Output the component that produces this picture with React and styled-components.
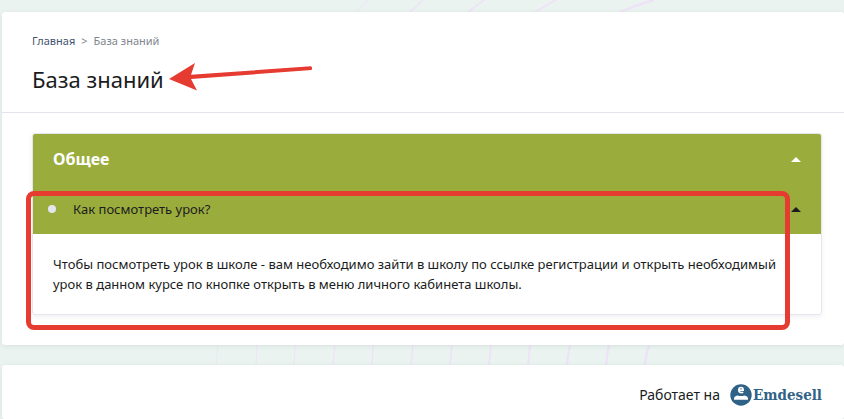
import React, { useState } from 'react';
import styled, { createGlobalStyle } from 'styled-components';

const GlobalStyle = createGlobalStyle`
* {
    box-sizing: border-box;
}

body {
    margin: 0;
    background: #eaf3f0;
    color: #1a1c21;
    font-family: "Noto Sans", sans-serif;
    font-size: 13px;
    line-height: 20px;
}
`

const Page = styled.div`
position: relative;
display: flex;
flex-direction: column;
gap: 20px;
padding: 12px 0 0 2px;
`

const Backdrop = styled.svg`
position: absolute;
top: 0;
left: 0;
z-index: -1;
`

const Card = styled.div`
background: #fff;
border-radius: 3px;
box-shadow: 0 1px 5px rgba(60, 80, 80, 0.1);
`

const Header = styled.header`
padding: 19px 30px 17px;
border-bottom: 1px solid #e2e5ef;
`

const Breadcrumbs = styled.nav`
display: flex;
gap: 6px;
font-size: 11px;
color: #80858f;
`

const CrumbLink = styled.a`
color: #3f5470;
text-decoration: none;
`

const Title = styled.h1`
position: relative;
width: fit-content;
margin: 12px 0 0;
font-size: 22px;
line-height: 32px;
font-weight: 400;
`

const Arrow = styled.svg`
position: absolute;
left: 136px;
top: -1px;
`

const Content = styled.main`
padding: 20px 22px 30px 30px;
`

const Accordion = styled.section`
position: relative;
border: 1px solid #e4e6ef;
border-radius: 3px;
box-shadow: 0 2px 5px rgba(60, 70, 100, 0.08);
`

const AccordionButton = styled.button`
display: flex;
align-items: center;
width: 100%;
height: 50px;
padding: 0 20px 0 ${props => props.$nested ? '15px' : '20px'};
border: 0;
border-radius: ${props => props.$nested ? '0' : '2px 2px 0 0'};
background: #9aac3c;
color: ${props => props.$nested ? '#1a1c21' : '#fff'};
font-family: inherit;
font-size: ${props => props.$nested ? '13px' : '16px'};
font-weight: ${props => props.$nested ? 400 : 700};
line-height: 20px;
text-align: left;
cursor: pointer;
`

const Bullet = styled.span`
width: 8px;
height: 8px;
margin-right: 17px;
border-radius: 50%;
background: #e4e6ef;
`

const Caret = styled.span`
margin-left: auto;
border: solid transparent;
border-width: 0 5px 5px;
border-bottom-color: currentColor;
transform: ${props => props.$open ? 'none' : 'rotate(180deg)'};
`

const Answer = styled.p`
margin: 0;
padding: 20px;
`

const Highlight = styled.div`
position: absolute;
top: 57px;
right: 31px;
bottom: -16px;
left: -7px;
border: 5px solid #e53b30;
border-radius: 8px;
pointer-events: none;
`

const Footer = styled(Card)`
display: flex;
justify-content: flex-end;
align-items: center;
gap: 10px;
padding: 19px 22px 13px;
font-size: 14px;
`

const Brand = styled.a`
display: flex;
align-items: center;
gap: 1px;
color: #2f6286;
font-family: "DejaVu Serif Condensed", "DejaVu Serif", serif;
font-size: 15px;
font-weight: 700;
text-decoration: none;
`

// decorative lines behind the cards
const lines = [
    'M357 12 L367 0', 'M410 12 L423 0', 'M468 12 L484 0', 'M535 12 L556 0', 'M620 12 Q636 5 654 0',
    'M216 365 L218 345', 'M256 365 L257 345', 'M294 365 L295 345', 'M333 365 L335 345',
    'M372 365 L373 345', 'M411 365 L413 345', 'M450 365 L452 345', 'M489 365 L491 345',
    'M528 365 L530 345', 'M567 365 Q568 354 570 345', 'M606 365 Q607 354 609 345', 'M645 365 Q646 354 649 345'
];

const BackgroundLines = () => (
    <Backdrop width="844" height="419" fill="none" stroke="#efe2f8" aria-hidden="true">
        {lines.map((d, i) => {
            const step = i < 5 ? i / 4 : (i - 5) / 11;
            return <path key={d} d={d} strokeWidth={0.8 + step * 1.6} />;
        })}
    </Backdrop>
);

const BrandMark = () => (
    <svg width="22" height="22" viewBox="0 0 22 22" aria-hidden="true">
        <circle cx="11" cy="11" r="10.7" fill="#2f6286" />
        <path d="M4 15.8 C3.6 13 5.2 11.8 7.6 11.4 Q11 12.8 14.4 11.4 C16.8 11.8 18.4 13 18 15.8 Z" fill="#fff" />
        <path d="M8.9 6.1 H13.2 C13.2 4.3 12.5 3.5 11.1 3.5 C9.6 3.5 8.8 4.5 8.8 6.1 C8.8 7.8 9.7 8.6 11.2 8.6 Q12.4 8.6 13.2 8.1" fill="none" stroke="#fff" strokeWidth="1.6" />
    </svg>
);

const App = () => {

    const [groupOpen, setGroupOpen] = useState(true);
    const [itemOpen, setItemOpen] = useState(true);

    return <>
        <GlobalStyle />
        <Page>
            <BackgroundLines />
            <Card>
                <Header>
                    <Breadcrumbs>
                        <CrumbLink href="#">Главная</CrumbLink>
                        <span>&gt;</span>
                        <span>База знаний</span>
                    </Breadcrumbs>
                    <Title>
                        База знаний
                        <Arrow width="146" height="30" viewBox="0 0 146 30" fill="#e53b30" aria-hidden="true">
                            <path d="M1 17 L27 1 L23 12.7 L143 4.3 Q145 6 143.5 8 L23 17 L29 28.5 Z" />
                        </Arrow>
                    </Title>
                </Header>
                <Content>
                    <Accordion>
                        <AccordionButton aria-expanded={groupOpen} onClick={() => setGroupOpen(!groupOpen)}>
                            Общее
                            <Caret $open={groupOpen} />
                        </AccordionButton>
                        {groupOpen && <>
                            <AccordionButton $nested aria-expanded={itemOpen} onClick={() => setItemOpen(!itemOpen)}>
                                <Bullet />
                                Как посмотреть урок?
                                <Caret $open={itemOpen} />
                            </AccordionButton>
                            {itemOpen && <Answer>
                                Чтобы посмотреть урок в школе - вам необходимо зайти в школу по ссылке регистрации и открыть необходимый урок в данном курсе по кнопке открыть в меню личного кабинета школы.
                            </Answer>}
                            <Highlight />
                        </>}
                    </Accordion>
                </Content>
            </Card>
            <Footer as="footer">
                <span>Работает на</span>
                <Brand href="#">
                    <BrandMark />
                    Emdesell
                </Brand>
            </Footer>
        </Page>
    </>;
}

export default App;
